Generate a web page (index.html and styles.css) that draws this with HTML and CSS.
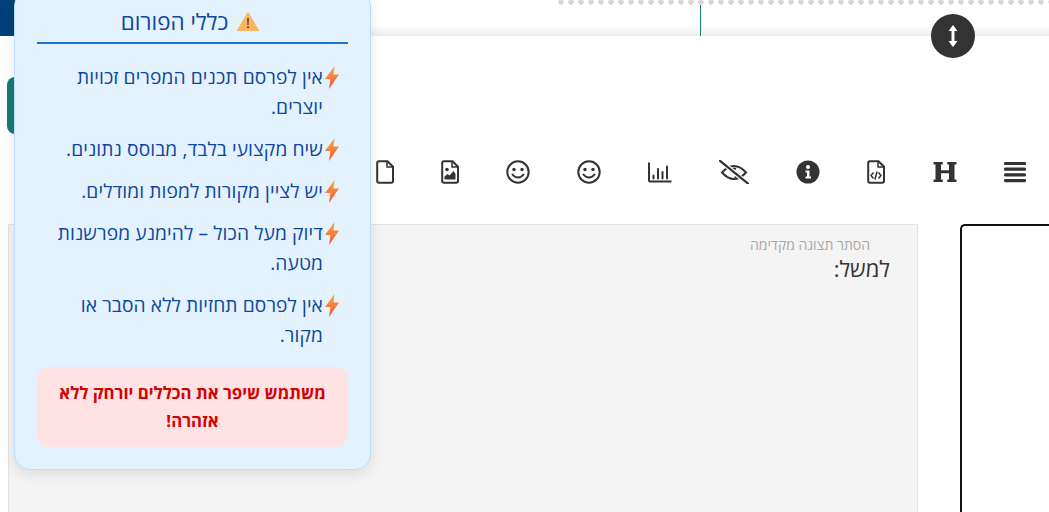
FILE: index.html
```html
<!DOCTYPE html>
<html lang="he">
    <head>
        <meta charset="utf-8">
        <title>כללי הפורום</title>
        <link rel="stylesheet" href="styles.css">
    </head>
    <body>
    <svg class="defs" width="0" height="0">
        <defs>
            <linearGradient id="boltFill" x1="0" y1="0" x2="0" y2="1">
                <stop offset="0" stop-color="#fbb03b"/>
                <stop offset="1" stop-color="#ef4f3c"/>
            </linearGradient>
        </defs>
        <symbol id="bolt" viewBox="0 0 14 23"><path d="M9.500 0 0 13h5.500L4 23 14 8.500H8.500z" fill="url(#boltFill)"/></symbol>
    </svg>

    <div class="topbar">
        <div class="brand"></div>
        <div class="topGap"></div>
        <div class="topRight"><div class="divider"></div></div>
    </div>
    <a class="resize" href="#">
        <svg width="12" height="24" viewBox="0 0 12 24"><path d="M6 1 L10.500 7 H7.500 V17 H10.500 L6 23 L1.500 17 H4.500 V7 H1.500 Z" fill="#fff"/></svg>
    </a>

    <div class="titleRow"><div class="tealBtn"></div></div>

    <div class="toolbar" dir="rtl">
        <svg class="ic" width="22" height="24" viewBox="0 0 22 24"><path d="M1.500 3.500h19M1.500 9.200h19M1.500 14.900h19M1.500 20.600h19" stroke="#333" stroke-width="3.200" stroke-linecap="round" fill="none"/></svg>
        <svg class="ic" width="25" height="24" viewBox="0 0 25 24"><path transform="translate(1)" d="M.5 2h9.200v2.600H8v5.600h8V4.600h-1.700V2h9.200v2.600h-2V19.400h2V22h-9.200v-2.600H16v-6.200H8v6.200h1.700V22H.5v-2.600h2V4.600h-2z" fill="#333"/></svg>
        <svg class="ic" width="18" height="24" viewBox="0 0 18 24"><path d="M3 1.200h8.500L17 6.700V21a1.800 1.800 0 0 1-1.800 1.800H3A1.800 1.800 0 0 1 1.200 21V3A1.800 1.800 0 0 1 3 1.200z" fill="none" stroke="#333" stroke-width="2"/><path d="M11 1.500V7h5.500" fill="none" stroke="#333" stroke-width="1.500"/><path d="M6.500 12.500 4 15.500l2.500 3M11.500 12.500l2.500 3-2.500 3M10 11.500l-2 8" fill="none" stroke="#333" stroke-width="1.500"/></svg>
        <svg class="ic" width="24" height="24" viewBox="0 0 24 24"><circle cx="12" cy="12" r="11.500" fill="#333"/><circle cx="12" cy="7" r="2" fill="#fff"/><path d="M9.500 10.500h4v6h1.500v2H9.500v-2H11v-4H9.500z" fill="#fff"/></svg>
        <svg class="ic" width="30" height="24" viewBox="0 0 30 24"><path d="M3 12.500C7 8 10.500 6 15 6s8 2 12 6.500c-4 4.500-7.500 6.500-12 6.500S7 17 3 12.500z" fill="none" stroke="#333" stroke-width="2"/><path d="M11 11a5 5 0 0 1 6-2M19.500 13a5 5 0 0 1-4 4.500" fill="none" stroke="#333" stroke-width="2"/><path d="M1.500 1 28.500 23.500" stroke="#fff" stroke-width="4.500"/><path d="M1 .8 29 23.600" stroke="#333" stroke-width="2.200" stroke-linecap="round"/></svg>
        <svg class="ic" width="24" height="24" viewBox="0 0 24 24"><path d="M1 2.500V20.500a1 1 0 0 0 1 1h21.500" fill="none" stroke="#333" stroke-width="2"/><path d="M5.500 15.500v3M10 9v9.500M14.500 12v6.500M19 6.500v12" stroke="#333" stroke-width="2" stroke-linecap="round"/></svg>
        <svg class="ic" width="24" height="24" viewBox="0 0 24 24"><circle cx="12" cy="12" r="10.700" fill="none" stroke="#333" stroke-width="2"/><circle cx="8" cy="9.500" r="1.700" fill="#333"/><circle cx="16" cy="9.500" r="1.700" fill="#333"/><path d="M6.500 14.500c3 4 8 4 11 0" fill="none" stroke="#333" stroke-width="2" stroke-linecap="round"/></svg>
        <svg class="ic" width="24" height="24" viewBox="0 0 24 24"><circle cx="12" cy="12" r="10.700" fill="none" stroke="#333" stroke-width="2"/><circle cx="8" cy="9.500" r="1.700" fill="#333"/><circle cx="16" cy="9.500" r="1.700" fill="#333"/><path d="M6.500 14.500c3 4 8 4 11 0" fill="none" stroke="#333" stroke-width="2" stroke-linecap="round"/></svg>
        <svg class="ic" width="18" height="24" viewBox="0 0 18 24"><path d="M3 1.200h8.500L17 6.700V21a1.800 1.800 0 0 1-1.800 1.800H3A1.800 1.800 0 0 1 1.200 21V3A1.800 1.800 0 0 1 3 1.200z" fill="none" stroke="#333" stroke-width="2"/><path d="M11 1.500V7h5.500" fill="none" stroke="#333" stroke-width="1.500"/><circle cx="6" cy="9.500" r="1.800" fill="#333"/><path d="M3.500 19.500v-3l3-2.500 2 1.500 4-4.500 2 3v5.500z" fill="#333"/></svg>
        <svg class="ic" width="18" height="24" viewBox="0 0 18 24"><path d="M3 1.200h8.500L17 6.700V21a1.800 1.800 0 0 1-1.800 1.800H3A1.800 1.800 0 0 1 1.200 21V3A1.800 1.800 0 0 1 3 1.200z" fill="none" stroke="#333" stroke-width="2"/><path d="M11 1.500V7h5.500" fill="none" stroke="#333" stroke-width="1.500"/></svg>
    </div>

    <div class="editorRow">
        <div class="preview" dir="rtl">
            <div class="hidePreview">הסתר תצוגה מקדימה</div>
            <div class="previewText">למשל:</div>
        </div>
        <div class="sideBox"></div>
    </div>

    <div class="rules" dir="rtl">
        <h2 class="rulesTitle">
            <svg width="22" height="19" viewBox="0 0 22 19"><path d="M11 .5 21.800 18.800H.2z" fill="#fdb45f" stroke="#fdb45f" stroke-linejoin="round"/><path d="M10.200 6h1.600l-.2 7h-1.200z" fill="#444"/><circle cx="11" cy="15.200" r="1" fill="#444"/></svg>
            <span>כללי הפורום</span>
        </h2>
        <ul class="rulesList">
            <li><svg class="bolt" width="14" height="23"><use href="#bolt"/></svg><span>אין לפרסם תכנים המפרים זכויות יוצרים.</span></li>
            <li><svg class="bolt" width="14" height="23"><use href="#bolt"/></svg><span>שיח מקצועי בלבד, מבוסס נתונים.</span></li>
            <li><svg class="bolt" width="14" height="23"><use href="#bolt"/></svg><span>יש לציין מקורות למפות ומודלים.</span></li>
            <li><svg class="bolt" width="14" height="23"><use href="#bolt"/></svg><span>דיוק מעל הכול – להימנע מפרשנות מטעה.</span></li>
            <li><svg class="bolt" width="14" height="23"><use href="#bolt"/></svg><span>אין לפרסם תחזיות ללא הסבר או מקור.</span></li>
        </ul>
        <div class="rulesAlert">משתמש שיפר את הכללים יורחק ללא אזהרה!</div>
    </div>
    </body>
</html>
```

FILE: styles.css
```css
html,body{
    margin:0;
    height:100%;
    overflow:hidden;
    background:#fff;
    font-family:"Open Sans","Noto Sans","Liberation Sans",sans-serif;
}
.defs{position:absolute;}
.topbar{
    height:36px;
    display:flex;
    background:linear-gradient(#fff 70%,#ededed);
}
.brand{width:15px;background:#004078;}
.topGap{width:543px;}
.topRight{
    flex:1;
    padding:5px 0 0 142px;
    display:flex;
    background:radial-gradient(circle at 3px 2px,#d6d6d6 2.4px,transparent 3px) repeat-x 0 0/10px 5px;
}
.divider{
    width:1px;
    background:#12817f;
    box-shadow:-3px 0 6px -1px rgba(0,0,0,.18);
}
.resize{
    position:absolute;
    left:931px;
    top:14px;
    width:44px;
    height:44px;
    border-radius:50%;
    background:#333;
    display:flex;
    align-items:center;
    justify-content:center;
}
.titleRow{padding:41px 0 0 7px;}
.tealBtn{
    width:40px;
    height:57px;
    border-radius:8px 0 0 8px;
    background:#187a78;
}
.toolbar{
    display:flex;
    gap:47px;
    height:24px;
    margin-top:26px;
    padding:0 23px 0 0;
}
.ic{display:block;flex:none;}
.editorRow{
    display:flex;
    gap:42px;
    height:288px;
    margin-top:40px;
    padding-left:8px;
}
.preview{
    width:910px;
    flex:none;
    box-sizing:border-box;
    padding:11px 27px 0 0;
    background:#f4f4f4;
    border:1px solid #e3e3e3;
    border-bottom:none;
}
.hidePreview{
    margin-right:20px;
    font-size:14px;
    line-height:17px;
    color:#a8a8a8;
}
.previewText{
    font-size:22px;
    line-height:30px;
    color:#333;
}
.sideBox{
    flex:1;
    border:2px solid #111;
    border-right:none;
    border-bottom:none;
    border-radius:5px 0 0 0;
    background:#fff;
}
.rules{
    position:absolute;
    left:14px;
    top:-10px;
    width:357px;
    box-sizing:border-box;
    padding:10px 22px 22px;
    background:#e3f2fd;
    border:1px solid #bbdefb;
    border-radius:16px;
    box-shadow:0 4px 14px rgba(0,0,0,.1);
}
.rulesTitle{
    margin:0;
    height:43px;
    box-sizing:border-box;
    display:flex;
    align-items:center;
    justify-content:center;
    gap:9px;
    padding-right:5px;
    font-size:22.4px;
    font-weight:400;
    color:#0d47a1;
    border-bottom:2px solid #1976d2;
}
.rulesList{
    list-style:none;
    margin:18px 0 0;
    padding:0 9px 0 0;
}
.rulesList li{
    display:flex;
    align-items:flex-start;
    gap:2px;
    margin-bottom:12px;
    font-size:19.2px;
    letter-spacing:.1px;
    line-height:30px;
    color:#0d47a1;
}
.bolt{flex:none;margin-top:4px;}
.rulesAlert{
    margin-top:17px;
    padding:12px;
    border-radius:12px;
    background:#ffe2e4;
    color:#d50000;
    font-size:16.8px;
    font-weight:700;
    line-height:28px;
    text-align:center;
}
```
